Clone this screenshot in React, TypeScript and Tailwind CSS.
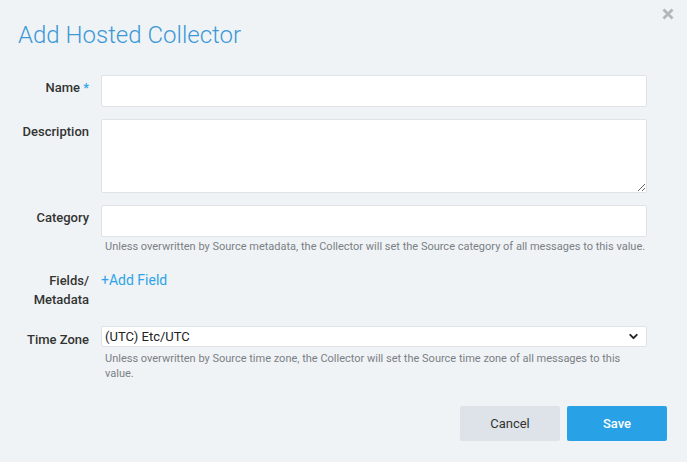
import { ChevronDown } from "lucide-react";

const labelBase = "w-[89px] shrink-0 text-right text-[13px] leading-4 font-medium text-[#333]";
const label = `${labelBase} pt-[5px]`;
const field = "h-[32px] w-full border border-[#dde3e8] rounded-[2px] bg-white";
const hint = "text-[11px] leading-[15px] text-[#7a7f85]";

export default function App() {
  return (
    <div className="w-[687px] h-[462px] bg-[#f0f3f5] relative font-['Roboto',sans-serif] overflow-hidden">
      <button className="absolute right-[13px] top-[8px] text-[#b3b6b9]">
        <svg width="12" height="12" viewBox="0 0 12 12">
          <path d="M1.5 1.5 L10.5 10.5 M10.5 1.5 L1.5 10.5" stroke="currentColor" strokeWidth="2.8" />
        </svg>
      </button>

      <h1 className="pl-[18px] pt-[20px] text-[24px] leading-[30px] font-light text-[#3c98d8]">
        Add Hosted Collector
      </h1>

      <div className="pt-[25px] pr-[40px] flex flex-col">
        <div className="flex gap-3">
          <div className={label}>
            Name <span className="text-[#2ea3e8]">*</span>
          </div>
          <input className={field} />
        </div>

        <div className="flex gap-3 mt-[12px]">
          <div className={label}>Description</div>
          <textarea className="h-[74px] w-full border border-[#dde3e8] rounded-[2px] bg-white" />
        </div>

        <div className="flex gap-3 mt-[12px]">
          <div className={label}>Category</div>
          <div className="w-full">
            <input className={field} />
            <p className={`${hint} mt-[2px] pl-1`}>
              Unless overwritten by Source metadata, the Collector will set the Source category of all messages to this value.
            </p>
          </div>
        </div>

        <div className="flex gap-3 mt-[16px]">
          <div className="w-[89px] shrink-0 text-right text-[13px] leading-[19px] font-medium text-[#333] pt-[1px]">
            Fields/
            <br />
            Metadata
          </div>
          <a className="text-[14px] leading-5 text-[#2ea3e8] cursor-pointer">+Add Field</a>
        </div>

        <div className="flex gap-3 mt-[17px]">
          <div className={`${labelBase} pt-[6px]`}>Time Zone</div>
          <div className="w-full">
            <div className="h-[21px] w-full border border-[#dde3e8] rounded-[2px] bg-white flex items-center justify-between pl-[3px] pr-[6px] text-[13px] text-[#222]">
              <span>(UTC) Etc/UTC</span>
              <ChevronDown className="w-[13px] h-[13px] text-[#222]" strokeWidth={3.5} />
            </div>
            <p className={`${hint} mt-[4px] pl-1 pr-6`}>
              Unless overwritten by Source time zone, the Collector will set the Source time zone of all messages to this value.
            </p>
          </div>
        </div>
      </div>

      <div className="absolute right-[20px] top-[406px] flex gap-[7px]">
        <button className="w-[100px] h-[35px] rounded-[2px] bg-[#dde3e9] text-[13px] text-[#333]">Cancel</button>
        <button className="w-[100px] h-[35px] rounded-[2px] bg-[#29a1e6] text-[13px] font-medium text-white">Save</button>
      </div>
    </div>
  );
}
